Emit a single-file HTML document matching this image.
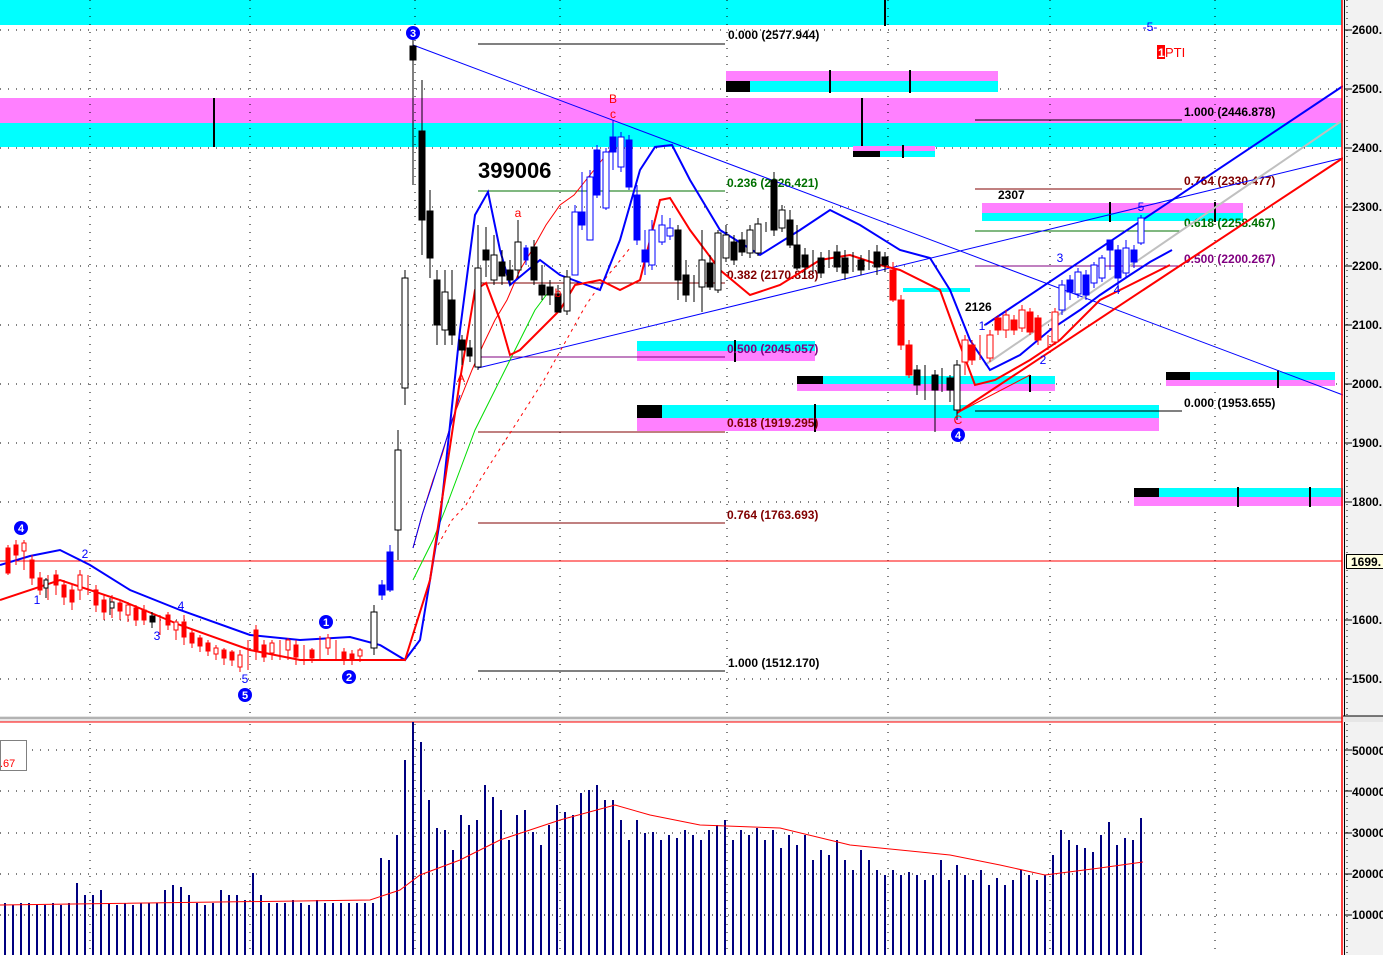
<!DOCTYPE html>
<html><head><meta charset="utf-8"><style>
html,body{margin:0;padding:0;background:#fff;}
svg{display:block;font-family:"Liberation Sans",sans-serif;}
.f{font-size:12px;font-weight:bold;}
</style></head><body>
<svg width="1383" height="955" viewBox="0 0 1383 955" xmlns="http://www.w3.org/2000/svg">
<rect width="1383" height="955" fill="#fff"/>
<!-- bands -->
<rect x="0" y="0" width="1342" height="25" fill="#00ffff"/>
<rect x="0" y="98" width="1342" height="25" fill="#ff80ff"/>
<rect x="0" y="123" width="1342" height="24" fill="#00ffff"/>
<g stroke="#000" stroke-width="2">
<line x1="885" y1="0" x2="885" y2="26"/><line x1="214" y1="98" x2="214" y2="147"/><line x1="862" y1="98" x2="862" y2="147"/>
</g>
<!-- grid -->
<g stroke="#000" stroke-width="1" stroke-dasharray="1 7">
<path d="M0 30H1342M0 89H1342M0 148H1342M0 207H1342M0 266H1342M0 325H1342M0 384H1342M0 443H1342M0 502H1342M0 620H1342M0 679H1342"/>
<path d="M90 0V716M250 0V716M415 0V716M560 0V716M727 0V716M888 0V716M1050 0V716M1215 0V716"/>
<path d="M0 750H1342M0 791H1342M0 833H1342M0 874H1342M0 915H1342"/>
<path d="M90 724V955M250 724V955M415 724V955M560 724V955M727 724V955M888 724V955M1050 724V955M1215 724V955"/>
</g>
<line x1="0" y1="561" x2="1342" y2="561" stroke="#f00" stroke-width="1"/>
<!-- blocks -->
<rect x="726" y="71" width="272" height="10" fill="#ff80ff"/><rect x="726" y="81" width="272" height="11" fill="#00ffff"/><rect x="726" y="81" width="24" height="11" fill="#000"/>
<rect x="853" y="146" width="82" height="5" fill="#ff80ff"/><rect x="853" y="151" width="82" height="6" fill="#00ffff"/><rect x="853" y="151" width="27" height="6" fill="#000"/>
<rect x="637" y="341" width="178" height="10" fill="#00ffff"/><rect x="637" y="351" width="178" height="10" fill="#ff80ff"/>
<rect x="797" y="376" width="258" height="8" fill="#00ffff"/><rect x="797" y="384" width="258" height="7" fill="#ff80ff"/><rect x="797" y="376" width="26" height="8" fill="#000"/>
<rect x="637" y="405" width="522" height="13" fill="#00ffff"/><rect x="637" y="418" width="522" height="13" fill="#ff80ff"/><rect x="637" y="405" width="25" height="13" fill="#000"/>
<rect x="1166" y="372" width="169" height="8" fill="#00ffff"/><rect x="1166" y="380" width="169" height="6" fill="#ff80ff"/><rect x="1166" y="372" width="24" height="8" fill="#000"/>
<rect x="1134" y="488" width="209" height="9" fill="#00ffff"/><rect x="1134" y="497" width="209" height="9" fill="#ff80ff"/><rect x="1134" y="488" width="25" height="9" fill="#000"/>
<rect x="982" y="203" width="261" height="10" fill="#ff80ff"/><rect x="982" y="213" width="261" height="8" fill="#00ffff"/>
<rect x="903" y="288" width="67" height="4" fill="#00ffff"/>
<g stroke="#000" stroke-width="2">
<line x1="830" y1="70" x2="830" y2="93"/><line x1="910" y1="70" x2="910" y2="93"/><line x1="903" y1="145" x2="903" y2="158"/>
<line x1="735" y1="340" x2="735" y2="362"/><line x1="1030" y1="375" x2="1030" y2="392"/><line x1="815" y1="404" x2="815" y2="432"/>
<line x1="1278" y1="370" x2="1278" y2="388"/><line x1="1238" y1="487" x2="1238" y2="507"/><line x1="1310" y1="487" x2="1310" y2="507"/>
<line x1="1110" y1="202" x2="1110" y2="222"/><line x1="1215" y1="202" x2="1215" y2="222"/>
</g>
<!-- fib lines -->
<g stroke-width="1">
<line x1="478" y1="44" x2="725" y2="44" stroke="#000"/>
<line x1="478" y1="191" x2="725" y2="191" stroke="#007000"/>
<line x1="478" y1="283" x2="725" y2="283" stroke="#800000"/>
<line x1="478" y1="357" x2="725" y2="357" stroke="#800080"/>
<line x1="478" y1="432" x2="725" y2="432" stroke="#800000"/>
<line x1="478" y1="523" x2="725" y2="523" stroke="#800000"/>
<line x1="478" y1="671" x2="725" y2="671" stroke="#000"/>
<line x1="975" y1="120" x2="1182" y2="120" stroke="#000"/>
<line x1="975" y1="189" x2="1182" y2="189" stroke="#800000"/>
<line x1="975" y1="231" x2="1182" y2="231" stroke="#007000"/>
<line x1="975" y1="266" x2="1182" y2="266" stroke="#800080"/>
<line x1="975" y1="411" x2="1182" y2="411" stroke="#000"/>
</g>
<g class="f">
<text x="728" y="39" fill="#000">0.000 (2577.944)</text>
<text x="727" y="187" fill="#007000">0.236 (2326.421)</text>
<text x="727" y="279" fill="#800000">0.382 (2170.818)</text>
<text x="727" y="353" fill="#800080">0.500 (2045.057)</text>
<text x="727" y="427" fill="#800000">0.618 (1919.295)</text>
<text x="727" y="519" fill="#800000">0.764 (1763.693)</text>
<text x="728" y="667" fill="#000">1.000 (1512.170)</text>
<text x="1184" y="116" fill="#000">1.000 (2446.878)</text>
<text x="1184" y="185" fill="#800000">0.764 (2330.477)</text>
<text x="1184" y="227" fill="#007000">0.618 (2258.467)</text>
<text x="1184" y="263" fill="#800080">0.500 (2200.267)</text>
<text x="1184" y="407" fill="#000">0.000 (1953.655)</text>
<text x="998" y="199" fill="#000">2307</text>
<text x="965" y="311" fill="#000">2126</text>
</g>
<text x="478" y="178" font-size="22" font-weight="bold" fill="#000">399006</text>
<!-- trend lines -->
<g fill="none">
<line x1="413" y1="45" x2="1343" y2="395" stroke="#0000ff" stroke-width="1"/>
<line x1="478" y1="368" x2="1343" y2="158" stroke="#0000ff" stroke-width="1"/>
<line x1="985" y1="365" x2="1343" y2="120" stroke="#c0c0c0" stroke-width="2"/>
<line x1="985" y1="325" x2="1343" y2="86" stroke="#0000ff" stroke-width="2"/>
<line x1="957" y1="413" x2="1343" y2="158" stroke="#ff0000" stroke-width="2"/>
<line x1="957" y1="413" x2="1030" y2="375" stroke="#ff0000" stroke-width="1"/>
<!-- x-marked lines -->
<polyline points="413,548 423,512 433,480 442,455 452,420 462,395 472,370 483,345 495,320 507,300 520,270 532,250 546,225 560,205 574,195 590,175 610,150" stroke="#ff0000" stroke-width="1"/>
<polyline points="413,580 423,560 433,540 445,510 460,470 475,430 490,400 505,370 520,340 535,310 550,290" stroke="#00dd00" stroke-width="1"/>
<polyline points="413,548 422,515 432,485 441,456 451,425 460,395" stroke="#0000ff" stroke-width="1"/>
<polyline points="438,545 452,520 466,505 480,480 496,455 512,430 528,405 544,380 558,355 572,330 586,305 600,285 614,268 630,248" stroke="#ff0000" stroke-width="1" stroke-dasharray="3 4"/>
<!-- MAs -->
<polyline points="0,565 30,556 60,550 90,565 130,590 180,610 250,635 300,640 350,637 380,645 405,660 420,640 440,520 460,330 475,215 488,192 500,250 510,285 540,260 560,275 600,290 620,240 640,170 655,147 672,145 690,180 720,230 760,255 800,230 830,210 860,225 900,250 930,258 950,290 970,340 990,370 1020,355 1050,330 1080,310 1100,295 1130,275 1150,262 1172,250" stroke="#0000ff" stroke-width="2"/>
<polyline points="0,600 60,580 120,600 180,625 250,650 300,660 350,660 405,660 430,580 460,380 475,290 486,283 500,320 510,355 520,350 560,310 575,285 600,280 620,290 640,280 660,200 670,198 690,230 720,270 750,295 780,285 820,260 850,255 880,265 900,270 940,290 960,345 975,385 995,380 1030,360 1060,340 1100,300 1130,285 1170,265" stroke="#ff0000" stroke-width="2"/>
</g>
<!-- left small candles -->
<g stroke="#f00" fill="#f00" stroke-width="1">
<path d="M8 545V575M16 540V565M24 540V570M32 555V585M40 572V595M48 575V600M56 570V595M64 580V605M72 585V610M80 570V600M88 575V595M96 585V612M104 595V620M112 595V618M120 600V620M128 602V622M136 605V626M144 605V625M160 615V635M168 612V630M176 620V640M184 615V645M192 630V648M200 635V652M208 640V656M216 645V660M224 648V665M232 650V666M240 650V672M248 640V670M256 625V660M264 640V662M272 640V660M280 640V660M288 638V660M296 640V665M304 645V665M312 648V663M320 636V660M328 634V655M336 640V660M344 648V665M352 650V665M360 648V662"/>
<rect x="6" y="548" width="4" height="25"/><rect x="14" y="545" width="4" height="10"/><rect x="30" y="560" width="4" height="18"/><rect x="38" y="578" width="4" height="12"/><rect x="54" y="575" width="4" height="10"/><rect x="62" y="585" width="4" height="12"/><rect x="70" y="590" width="4" height="12"/><rect x="94" y="590" width="4" height="15"/><rect x="102" y="600" width="4" height="12"/><rect x="118" y="603" width="4" height="8"/><rect x="134" y="608" width="4" height="12"/><rect x="142" y="610" width="4" height="10"/><rect x="166" y="615" width="4" height="10"/><rect x="182" y="622" width="4" height="15"/><rect x="190" y="633" width="4" height="10"/><rect x="198" y="638" width="4" height="8"/><rect x="206" y="643" width="4" height="8"/><rect x="222" y="650" width="4" height="8"/><rect x="230" y="652" width="4" height="8"/><rect x="254" y="630" width="4" height="20"/><rect x="262" y="645" width="4" height="12"/><rect x="294" y="645" width="4" height="12"/><rect x="310" y="650" width="4" height="8"/><rect x="342" y="652" width="4" height="8"/><rect x="350" y="654" width="4" height="6"/>
<rect x="22" y="543" width="4" height="8" fill="#fff"/><rect x="78" y="575" width="4" height="15" fill="#fff"/><rect x="126" y="605" width="4" height="10" fill="#fff"/><rect x="174" y="622" width="4" height="8" fill="#fff"/><rect x="214" y="648" width="4" height="6" fill="#fff"/><rect x="238" y="655" width="4" height="12" fill="#fff"/><rect x="270" y="643" width="4" height="10" fill="#fff"/><rect x="286" y="640" width="4" height="10" fill="#fff"/><rect x="326" y="638" width="4" height="10" fill="#fff"/><rect x="358" y="650" width="4" height="6" fill="#fff"/>
</g>
<g stroke="#000" fill="#000"><path d="M152 612V628M46 578V598M110 598V615"/><rect x="150" y="616" width="5" height="6"/><rect x="44" y="580" width="4" height="8" fill="#fff"/><rect x="110" y="602" width="4" height="6" fill="#fff"/></g>
<!-- main candles black -->
<g stroke="#000" stroke-width="1" fill="#000">
<path d="M374 605V655M398 430V560M405 270V405M413 40V185M422 80V255M430 190V278M437 270V345M445 270V345M452 270V345M462 335V365M470 340V362M478 225V370M486 227V277M494 235V285M502 250V285M510 260V285M518 220V278M534 240V285M542 265V300M550 280V305M558 285V312M567 270V315M678 225V300M686 260V302M694 275V302M702 230V312M710 255V290M718 230V293M726 225V262M734 235V265M742 232V256M750 225V258M758 218V256M766 222V232M774 172V236M782 205V232M790 210V248M797 225V270M805 248V275M813 250V272M821 252V278M829 250V268M837 245V272M845 250V280M853 252V272M861 255V275M869 250V270M877 245V275M885 252V272"/>
<rect x="371" y="612" width="6" height="36" fill="#fff"/><rect x="395" y="450" width="6" height="80" fill="#fff"/><rect x="402" y="278" width="6" height="110" fill="#fff"/>
<rect x="410" y="46" width="6" height="14"/><rect x="419" y="131" width="6" height="89"/><rect x="427" y="211" width="6" height="47"/><rect x="434" y="280" width="6" height="45"/><rect x="442" y="292" width="6" height="38" fill="#fff"/><rect x="449" y="300" width="6" height="35"/><rect x="459" y="340" width="6" height="10"/><rect x="467" y="348" width="5" height="8"/><rect x="475" y="268" width="6" height="99" fill="#fff"/><rect x="483" y="250" width="6" height="10"/><rect x="491" y="255" width="6" height="25" fill="#fff"/><rect x="499" y="262" width="6" height="14"/><rect x="507" y="270" width="6" height="10"/><rect x="515" y="242" width="6" height="28" fill="#fff"/><rect x="531" y="247" width="6" height="33"/><rect x="539" y="285" width="6" height="10"/><rect x="547" y="287" width="6" height="8"/><rect x="555" y="294" width="6" height="18"/><rect x="564" y="277" width="6" height="34" fill="#fff"/>
<rect x="675" y="230" width="6" height="50"/><rect x="683" y="275" width="6" height="20"/><rect x="699" y="260" width="6" height="27" fill="#fff"/><rect x="707" y="263" width="6" height="24"/><rect x="715" y="233" width="6" height="57" fill="#fff"/><rect x="723" y="235" width="6" height="23" fill="#fff"/><rect x="731" y="242" width="6" height="18"/><rect x="739" y="240" width="6" height="12"/><rect x="747" y="230" width="6" height="23" fill="#fff"/><rect x="755" y="224" width="6" height="29" fill="#fff"/><rect x="771" y="180" width="6" height="50"/><rect x="779" y="210" width="6" height="18" fill="#fff"/><rect x="787" y="220" width="6" height="25"/><rect x="794" y="245" width="6" height="23"/><rect x="802" y="255" width="6" height="12"/><rect x="818" y="258" width="6" height="15"/><rect x="834" y="252" width="6" height="15"/><rect x="842" y="258" width="6" height="15"/><rect x="858" y="260" width="6" height="10"/><rect x="874" y="252" width="6" height="15"/><rect x="882" y="257" width="6" height="8"/>
<path d="M917 365V395M925 365V400M935 370V432M942 368V392M950 375V402M957 360V420"/>
<rect x="914" y="370" width="6" height="15"/><rect x="932" y="375" width="6" height="15"/><rect x="947" y="378" width="6" height="12"/><rect x="954" y="365" width="6" height="45" fill="#fff"/>
</g>
<!-- blue candles -->
<g stroke="#0000ff" stroke-width="1" fill="#0000ff">
<path d="M382 580V600M390 545V592M526 245V265M575 205V275M582 172V230M590 170V240M597 145V198M606 148V210M613 120V170M621 132V172M629 135V190M637 185V245M645 230V275M652 220V270M662 215V245M670 218V240M1062 280V315M1070 275V300M1078 268V298M1086 270V300M1094 262V288M1102 255V282M1110 240V270M1118 245V292M1126 240V278M1134 245V268M1141 215V245"/>
<rect x="379" y="585" width="6" height="10"/><rect x="387" y="552" width="6" height="38"/><rect x="524" y="248" width="4" height="12"/>
<rect x="572" y="212" width="6" height="63" fill="#fff"/><rect x="579" y="212" width="6" height="13"/><rect x="587" y="177" width="6" height="63" fill="#fff"/><rect x="594" y="150" width="6" height="45"/><rect x="603" y="152" width="6" height="56" fill="#fff"/><rect x="610" y="137" width="6" height="15"/><rect x="618" y="137" width="6" height="30" fill="#fff"/><rect x="626" y="140" width="6" height="47"/><rect x="634" y="195" width="6" height="45"/><rect x="642" y="250" width="6" height="12"/><rect x="649" y="230" width="6" height="35" fill="#fff"/><rect x="659" y="225" width="6" height="17" fill="#fff"/><rect x="667" y="228" width="6" height="8" fill="#fff"/>
<rect x="1059" y="285" width="6" height="25" fill="#fff"/><rect x="1067" y="280" width="6" height="12"/><rect x="1075" y="272" width="6" height="22" fill="#fff"/><rect x="1083" y="275" width="6" height="20"/><rect x="1091" y="265" width="6" height="18" fill="#fff"/><rect x="1099" y="258" width="6" height="20" fill="#fff"/><rect x="1107" y="240" width="6" height="10"/><rect x="1115" y="250" width="6" height="28"/><rect x="1123" y="248" width="6" height="25" fill="#fff"/><rect x="1131" y="250" width="6" height="12"/><rect x="1138" y="218" width="6" height="25" fill="#fff"/>
</g>
<!-- red candles right -->
<g stroke="#ff0000" stroke-width="1" fill="#ff0000">
<path d="M893 262V302M901 295V350M909 340V378M965 335V375M972 340V365M980 335V360M990 330V362M998 315V335M1006 310V338M1014 315V335M1022 305V332M1030 308V335M1038 315V345M1048 335V350M1055 308V345"/>
<rect x="890" y="270" width="6" height="30"/><rect x="898" y="300" width="6" height="45"/><rect x="906" y="345" width="6" height="30"/><rect x="962" y="340" width="6" height="22" fill="#fff"/><rect x="969" y="345" width="6" height="15"/><rect x="987" y="335" width="6" height="23" fill="#fff"/><rect x="995" y="318" width="6" height="12"/><rect x="1003" y="315" width="6" height="15" fill="#fff"/><rect x="1011" y="320" width="6" height="10"/><rect x="1019" y="310" width="6" height="18" fill="#fff"/><rect x="1027" y="312" width="6" height="20"/><rect x="1035" y="318" width="6" height="22"/><rect x="1052" y="312" width="6" height="30" fill="#fff"/>
</g>
<!-- labels -->
<g font-size="12" font-weight="bold" text-anchor="middle">
<g fill="#0000ff"><circle cx="413" cy="33" r="7"/><circle cx="21" cy="528" r="7"/><circle cx="245" cy="695" r="7"/><circle cx="326" cy="622" r="7"/><circle cx="349" cy="677" r="7"/><circle cx="958" cy="435" r="7"/></g>
<g fill="#fff" font-size="11"><text x="413" y="37">3</text><text x="21" y="532">4</text><text x="245" y="699">5</text><text x="326" y="626">1</text><text x="349" y="681">2</text><text x="958" y="439">4</text></g>
<g fill="#0000ff" font-weight="normal"><text x="85" y="558">2</text><text x="37" y="604">1</text><text x="157" y="640">3</text><text x="181" y="610">4</text><text x="245" y="683">5</text><text x="982" y="330">1</text><text x="1060" y="262">3</text><text x="1043" y="364">2</text><text x="1117" y="294">4</text><text x="1141" y="211">5</text><text x="1150" y="31">-5-</text></g>
<g fill="#ff0000" font-weight="normal"><text x="518" y="217">a</text><text x="558" y="297">b</text><text x="613" y="103">B</text><text x="613" y="118">c</text><text x="461" y="382">A</text><text x="958" y="424">C</text></g>
</g>
<rect x="1157" y="45" width="8" height="14" fill="#f00"/><text x="1158" y="57" font-size="12" font-weight="bold" fill="#fff">1</text><text x="1165" y="57" font-size="13" fill="#f00">PTI</text>
<!-- pane separator -->
<rect x="0" y="716" width="1383" height="6" fill="#e6e6e6"/><line x1="0" y1="718" x2="1383" y2="718" stroke="#808080"/><line x1="0" y1="722" x2="1342" y2="722" stroke="#f00"/>
<!-- volume -->
<path stroke="#000080" stroke-width="2" fill="none" d="M5 955V903M13 955V905M21 955V903M29 955V903M37 955V905M45 955V905M53 955V903M61 955V905M69 955V903M77 955V883M85 955V895M93 955V895M101 955V890M109 955V903M117 955V905M125 955V903M133 955V905M141 955V903M149 955V903M157 955V903M165 955V890M173 955V885M181 955V887M189 955V895M197 955V903M205 955V905M213 955V903M221 955V890M229 955V895M237 955V895M245 955V900M253 955V873M261 955V895M269 955V903M277 955V903M285 955V903M293 955V900M301 955V903M309 955V905M317 955V900M325 955V903M333 955V903M341 955V903M349 955V903M357 955V903M365 955V903M373 955V903M381 955V858M389 955V860M397 955V835M405 955V760M413 955V722M421 955V742M429 955V800M437 955V828M445 955V830M453 955V850M461 955V815M469 955V825M477 955V820M485 955V785M493 955V797M501 955V810M509 955V840M517 955V815M525 955V810M533 955V832M541 955V845M549 955V825M557 955V805M565 955V812M573 955V815M581 955V793M589 955V790M597 955V785M605 955V800M613 955V800M621 955V820M629 955V840M637 955V820M645 955V833M653 955V832M661 955V840M669 955V835M677 955V838M685 955V830M693 955V835M701 955V840M709 955V830M717 955V825M725 955V820M733 955V840M741 955V830M749 955V835M757 955V828M765 955V840M773 955V830M781 955V848M789 955V835M797 955V845M805 955V835M813 955V860M821 955V850M829 955V855M837 955V840M845 955V860M853 955V870M861 955V850M869 955V860M877 955V870M885 955V875M893 955V870M901 955V875M909 955V872M917 955V875M925 955V880M933 955V875M941 955V860M949 955V880M957 955V865M965 955V875M973 955V880M981 955V870M989 955V885M997 955V878M1005 955V885M1013 955V880M1021 955V870M1029 955V875M1037 955V880M1045 955V875M1053 955V855M1061 955V830M1069 955V840M1077 955V845M1085 955V848M1093 955V852M1101 955V835M1109 955V822M1117 955V845M1125 955V838M1133 955V840M1141 955V818"/>
<polyline fill="none" stroke="#ff0000" stroke-width="1" points="0,905 370,900 400,890 420,875 460,860 500,840 560,820 615,805 650,815 700,825 780,828 850,845 950,855 1000,865 1045,875 1100,868 1143,862"/>
<rect x="0.5" y="740.5" width="26" height="30" fill="#fff" stroke="#808080"/><text x="0" y="767" font-size="11" fill="#f00">.67</text>
<!-- right axis -->
<rect x="1343" y="0" width="40" height="955" fill="#f2f2f2"/>
<line x1="1342" y1="0" x2="1342" y2="955" stroke="#f00" stroke-width="1.5"/>
<line x1="1344.5" y1="0" x2="1344.5" y2="955" stroke="#000"/>
<rect x="1343" y="716" width="40" height="6" fill="#e6e6e6"/><line x1="1343" y1="716" x2="1383" y2="716" stroke="#000"/>
<g stroke="#000" stroke-dasharray="1 5"><path d="M1347 0V716M1347 724V955"/></g>
<g stroke="#000"><path d="M1345 30H1352M1345 89H1352M1345 148H1352M1345 207H1352M1345 266H1352M1345 325H1352M1345 384H1352M1345 443H1352M1345 502H1352M1345 620H1352M1345 679H1352M1345 750H1352M1345 791H1352M1345 833H1352M1345 874H1352M1345 915H1352"/></g>
<g class="f" fill="#000"><text x="1352" y="34">2600.</text><text x="1352" y="93">2500.</text><text x="1352" y="152">2400.</text><text x="1352" y="211">2300.</text><text x="1352" y="270">2200.</text><text x="1352" y="329">2100.</text><text x="1352" y="388">2000.</text><text x="1352" y="447">1900.</text><text x="1352" y="506">1800.</text><text x="1352" y="624">1600.</text><text x="1352" y="683">1500.</text><text x="1352" y="755">50000</text><text x="1352" y="796">40000</text><text x="1352" y="837">30000</text><text x="1352" y="878">20000</text><text x="1352" y="919">10000</text></g>
<rect x="1346.5" y="554.5" width="40" height="14" fill="#ffffe0" stroke="#000"/><text x="1351" y="566" class="f" fill="#000">1699.</text>
</svg>
</body></html>
